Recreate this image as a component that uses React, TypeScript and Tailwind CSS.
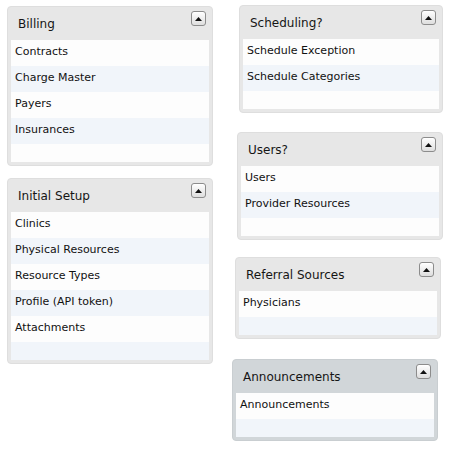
import React from 'react';

type Panel = {
  title: string;
  items: string[];
  dark?: boolean;
};

const billing: Panel = { title: 'Billing', items: ['Contracts', 'Charge Master', 'Payers', 'Insurances'] };
const setup: Panel = {
  title: 'Initial Setup',
  items: ['Clinics', 'Physical Resources', 'Resource Types', 'Profile (API token)', 'Attachments'],
};
const scheduling: Panel = { title: 'Scheduling?', items: ['Schedule Exception', 'Schedule Categories'] };
const users: Panel = { title: 'Users?', items: ['Users', 'Provider Resources'] };
const referral: Panel = { title: 'Referral Sources', items: ['Physicians'] };
const announcements: Panel = { title: 'Announcements', items: ['Announcements'], dark: true };

const CollapseButton: React.FC = () => (
  <button
    type="button"
    className="flex items-center justify-center w-[15px] h-[15px] rounded-[3px] border border-[#8c8c8c] bg-gradient-to-b from-white to-[#dedede] shadow-[inset_0_1px_0_#fff]"
  >
    <svg width="7" height="4" viewBox="0 0 7 4">
      <path d="M0 4 L3.5 0 L7 4 Z" fill="#111" />
    </svg>
  </button>
);

const Portlet: React.FC<{ panel: Panel; className?: string }> = ({ panel, className = '' }) => {
  // one empty row at the end, striped like the rest
  const rows = [...panel.items, ''];
  return (
    <div
      className={`rounded-[4px] border px-[3px] pb-[3px] ${
        panel.dark ? 'bg-[#d1d6d9] border-[#c9ced1]' : 'bg-[#e7e7e7] border-[#dedede]'
      } ${className}`}
    >
      <div className="flex justify-between h-[33px]">
        <span className="pl-[7px] pt-[9px] text-[12px] leading-[16px] text-[#151515]">{panel.title}</span>
        <div className="pt-[4px] pr-[3px]">
          <CollapseButton />
        </div>
      </div>
      <ul>
        {rows.map((item, i) => (
          <li
            key={i}
            className={`pl-[4px] text-[11px] text-[#111] ${item ? 'h-[26px] leading-[24px]' : 'h-[18px]'} ${
              i % 2 === 1 ? 'bg-[#f1f5fa]' : 'bg-[#fdfdfd]'
            }`}
          >
            {item}
          </li>
        ))}
      </ul>
    </div>
  );
};

export default function App() {
  return (
    <div
      className="flex w-[451px] h-[459px] bg-white"
      style={{ fontFamily: '"DejaVu Sans", Verdana, sans-serif' }}
    >
      <div className="flex flex-col w-[206px] ml-[7px] pt-[6px]">
        <Portlet panel={billing} />
        <Portlet panel={setup} className="mt-[12px]" />
      </div>
      <div className="flex flex-col ml-[19px] pt-[5px] w-[211px]">
        <Portlet panel={scheduling} className="ml-[7px] w-[204px]" />
        <Portlet panel={users} className="ml-[5px] w-[206px] mt-[19px]" />
        <Portlet panel={referral} className="ml-[3px] w-[206px] mt-[17px]" />
        <Portlet panel={announcements} className="w-[206px] mt-[20px]" />
      </div>
    </div>
  );
}
